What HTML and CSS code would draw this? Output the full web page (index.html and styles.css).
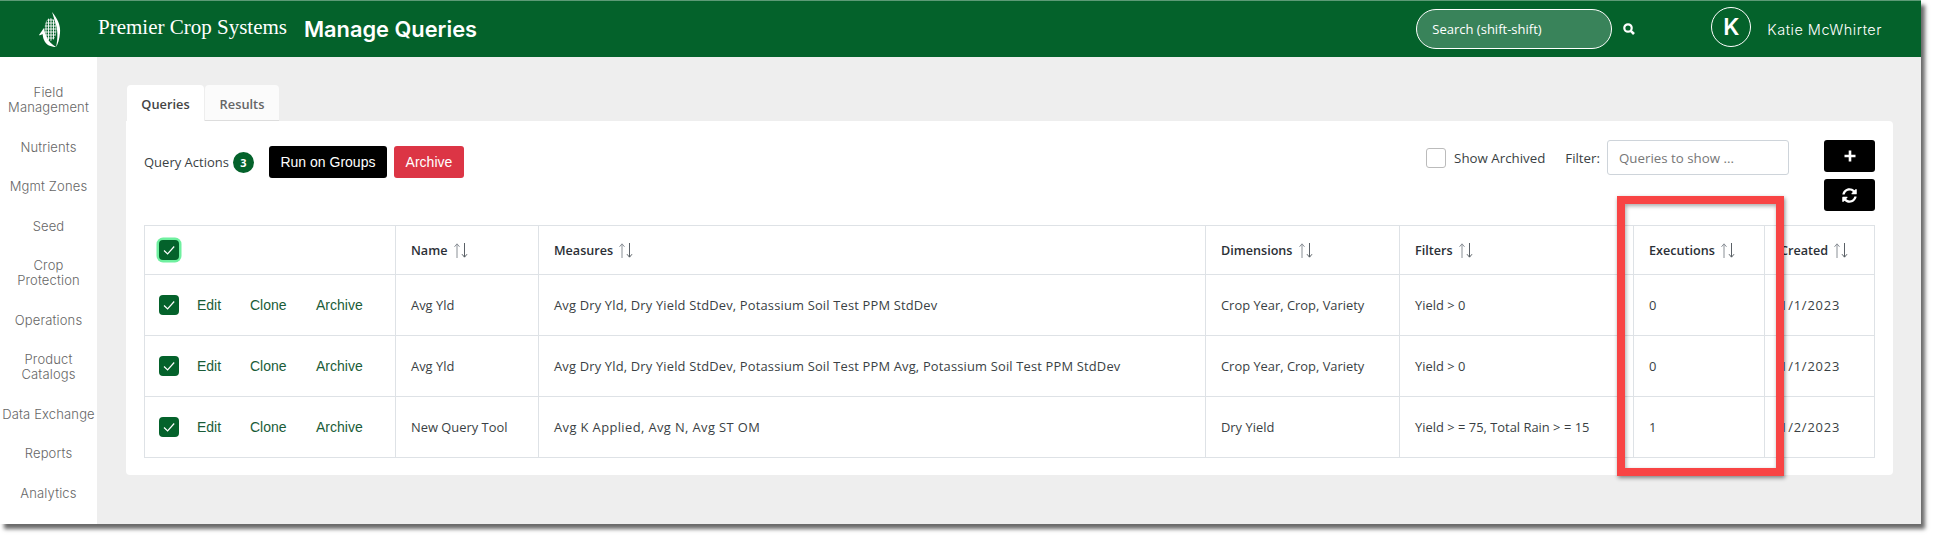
FILE: index.html
```html
<!DOCTYPE html>
<html>
<head>
    <title>Manage Queries</title>
    <link rel="stylesheet" href="styles.css">
</head>
<body>
    <svg class="sprite" width="0" height="0">
        <symbol id="sort-arrows" viewBox="0 0 14 15">
            <path class="arrow-up" d="M3 15 V1 M.5 3.8 L3 .8 L5.5 3.8"/>
            <path class="arrow-down" d="M10.5 0 V14 M8 11.2 L10.5 14.2 L13 11.2"/>
        </symbol>
        <symbol id="tick" viewBox="0 0 20 20">
            <path d="M5 10.5 L8.6 14 L15.2 6.5"/>
        </symbol>
    </svg>

    <div class="screen">
        <header class="topbar">
            <svg class="logo" viewBox="0 0 24 38" width="24" height="38">
                <clipPath id="cob"><ellipse cx="12.5" cy="18.5" rx="6" ry="11.5"/></clipPath>
                <g clip-path="url(#cob)" stroke="#fff" stroke-width=".9">
                    <path d="M5 9 H20 M5 12 H20 M5 15 H20 M5 18 H20 M5 21 H20 M5 24 H20 M5 27 H20"/>
                    <path d="M8 5 V32 M10.5 5 V32 M13 5 V32 M15.5 5 V32 M18 5 V32"/>
                </g>
                <path d="M14 1 C19 7 23 14 22 22 C21.5 28 20 33 18 36 C20 28 20 18 17 11 C16 7 15 4 14 1Z" fill="#fff"/>
                <path d="M1 24 C3 21 4.5 19 6 17 C7 24 10 31 18 36 C13 36 8 34 6 29 C5 27 5 25 4.5 23 C3.5 24 2 24.5 1 24Z" fill="#fff"/>
            </svg>
            <span class="brand">Premier Crop Systems</span>
            <span class="page-title">Manage Queries</span>
            <div class="search-pill">Search (shift-shift)</div>
            <svg class="search-icon" viewBox="0 0 12 12" width="12" height="12">
                <circle cx="5" cy="5" r="3.7" fill="none" stroke="#fff" stroke-width="2.2"/>
                <path d="M7.8 7.8 L11 11" stroke="#fff" stroke-width="2.6"/>
            </svg>
            <div class="avatar">K</div>
            <span class="user-name">Katie McWhirter</span>
        </header>

        <div class="main">
            <nav class="sidebar">
                <a>Field<br>Management</a>
                <a>Nutrients</a>
                <a>Mgmt Zones</a>
                <a>Seed</a>
                <a>Crop<br>Protection</a>
                <a>Operations</a>
                <a>Product<br>Catalogs</a>
                <a>Data Exchange</a>
                <a>Reports</a>
                <a>Analytics</a>
            </nav>

            <div class="content">
                <div class="tabs">
                    <div class="tab active">Queries</div>
                    <div class="tab">Results</div>
                </div>
                <div class="card">
                    <div class="toolbar">
                        <div class="actions">
                            <span class="actions-label">Query Actions</span>
                            <span class="badge">3</span>
                            <button class="btn btn-black btn-run">Run on Groups</button>
                            <button class="btn btn-red">Archive</button>
                        </div>
                        <div class="filters">
                            <span class="check-empty"></span>
                            <span class="show-label">Show Archived</span>
                            <span class="filter-label">Filter:</span>
                            <div class="filter-input">Queries to show ...</div>
                        </div>
                        <div class="icon-btns">
                            <button class="btn btn-black btn-icon">
                                <svg viewBox="0 0 14 14" width="14" height="14"><path d="M7 1.5 V12.5 M1.5 7 H12.5" stroke="#fff" stroke-width="2.6"/></svg>
                            </button>
                            <button class="btn btn-black btn-icon">
                                <svg viewBox="0 0 512 512" width="15" height="15"><path fill="#fff" d="M370.72 133.28C339.458 104.008 298.888 87.962 255.848 88c-77.458.068-144.328 53.178-162.791 126.85-1.344 5.363-6.122 9.15-11.651 9.15H24.103c-7.498 0-13.194-6.807-11.807-14.176C33.933 94.924 134.813 8 256 8c66.448 0 126.791 26.136 171.315 68.685L463.03 40.97C478.149 25.851 504 36.559 504 57.941V192c0 13.255-10.745 24-24 24H345.941c-21.382 0-32.09-25.851-16.971-40.971l41.75-41.749zM32 296h134.059c21.382 0 32.09 25.851 16.971 40.971l-41.75 41.75c31.262 29.273 71.835 45.319 114.876 45.28 77.418-.07 144.315-53.144 162.787-126.849 1.344-5.363 6.122-9.15 11.651-9.15h57.304c7.498 0 13.194 6.807 11.807 14.176C478.067 417.076 377.187 504 256 504c-66.448 0-126.791-26.136-171.315-68.685L48.97 471.03C33.851 486.149 8 475.441 8 454.059V320c0-13.255 10.745-24 24-24z"/></svg>
                            </button>
                        </div>
                    </div>

                    <table class="query-table">
                        <colgroup>
                            <col class="col-select"><col class="col-name"><col class="col-measures"><col class="col-dims"><col class="col-filters"><col class="col-exec"><col class="col-created">
                        </colgroup>
                        <thead>
                            <tr>
                                <th><span class="check check-focus"><svg><use href="#tick"/></svg></span></th>
                                <th>Name <svg class="sort"><use href="#sort-arrows"/></svg></th>
                                <th>Measures <svg class="sort"><use href="#sort-arrows"/></svg></th>
                                <th>Dimensions <svg class="sort"><use href="#sort-arrows"/></svg></th>
                                <th>Filters <svg class="sort"><use href="#sort-arrows"/></svg></th>
                                <th>Executions <svg class="sort"><use href="#sort-arrows"/></svg></th>
                                <th>Created <svg class="sort"><use href="#sort-arrows"/></svg></th>
                            </tr>
                        </thead>
                        <tbody>
                            <tr>
                                <td>
                                    <div class="row-actions">
                                        <span class="check"><svg><use href="#tick"/></svg></span>
                                        <a class="row-edit">Edit</a><a class="row-clone">Clone</a><a>Archive</a>
                                    </div>
                                </td>
                                <td>Avg Yld</td>
                                <td class="measures">Avg Dry Yld, Dry Yield StdDev, Potassium Soil Test PPM StdDev</td>
                                <td>Crop Year, Crop, Variety</td>
                                <td>Yield &gt; 0</td>
                                <td>0</td>
                                <td class="date">1/1/2023</td>
                            </tr>
                            <tr>
                                <td>
                                    <div class="row-actions">
                                        <span class="check"><svg><use href="#tick"/></svg></span>
                                        <a class="row-edit">Edit</a><a class="row-clone">Clone</a><a>Archive</a>
                                    </div>
                                </td>
                                <td>Avg Yld</td>
                                <td class="measures">Avg Dry Yld, Dry Yield StdDev, Potassium Soil Test PPM Avg, Potassium Soil Test PPM StdDev</td>
                                <td>Crop Year, Crop, Variety</td>
                                <td>Yield &gt; 0</td>
                                <td>0</td>
                                <td class="date">1/1/2023</td>
                            </tr>
                            <tr>
                                <td>
                                    <div class="row-actions">
                                        <span class="check"><svg><use href="#tick"/></svg></span>
                                        <a class="row-edit">Edit</a><a class="row-clone">Clone</a><a>Archive</a>
                                    </div>
                                </td>
                                <td>New Query Tool</td>
                                <td class="measures measures-short">Avg K Applied, Avg N, Avg ST OM</td>
                                <td>Dry Yield</td>
                                <td>Yield <span class="op">&gt;</span>= 75, Total Rain <span class="op">&gt;</span>= 15</td>
                                <td>1</td>
                                <td class="date">1/2/2023</td>
                            </tr>
                        </tbody>
                    </table>
                </div>
            </div>
        </div>
    </div>

    <!-- Red callout drawn over the Executions column -->
    <div class="callout"></div>
</body>
</html>
```

FILE: styles.css
```css
html, body {
    margin: 0;
    height: 539px;
    overflow: hidden;
    background: #fff;
}

body {
    position: relative;
    font-family: "Open Sans", "Noto Sans", sans-serif;
    color: #3a3f44;
}

.sprite {
    display: block;
    height: 0;
}

.screen {
    width: 1921px;
    height: 524px;
    background: #eee;
    box-shadow: 4px 5px 4px #6a6a6a;
    display: flex;
    flex-direction: column;
}

/* Top bar */
.topbar {
    height: 56px;
    flex: none;
    background: #04622b;
    border-top: 1px solid #5d9a76;
    display: flex;
    align-items: center;
    color: #fff;
}

.logo {
    margin-left: 38px;
    margin-top: 2px;
}

.brand {
    margin-left: 36px;
    margin-top: -4px;
    font-family: "Liberation Serif", serif;
    font-size: 21px;
}

.page-title {
    margin-left: 17px;
    font-family: Inter, sans-serif;
    font-size: 21.8px;
    font-weight: 600;
}

.search-pill {
    margin-left: auto;
    width: 196px;
    height: 40px;
    box-sizing: border-box;
    padding-left: 15px;
    display: flex;
    align-items: center;
    background: #39835a;
    border: 1px solid #fff;
    border-radius: 20px;
    font-size: 13px;
}

.search-icon {
    margin-left: 11px;
}

.avatar {
    width: 40px;
    height: 40px;
    box-sizing: border-box;
    margin-left: 76px;
    margin-top: -4px;
    border: 1px solid #fff;
    border-radius: 50%;
    display: flex;
    align-items: center;
    justify-content: center;
    font-family: Inter, sans-serif;
    font-size: 23px;
    font-weight: 600;
}

.user-name {
    margin-left: 16px;
    margin-right: 39px;
    font-family: Inter, sans-serif;
    font-size: 14.5px;
    font-weight: 300;
    letter-spacing: .5px;
}

/* Sidebar */
.main {
    flex: 1;
    display: flex;
    min-height: 0;
}

.sidebar {
    width: 97px;
    flex: none;
    box-sizing: border-box;
    padding-top: 16px;
    background: #fff;
    text-align: center;
    font-family: Inter, sans-serif;
    font-size: 13px;
    font-weight: 300;
    letter-spacing: .15px;
    line-height: 15px;
    color: #666;
}

.sidebar a {
    display: block;
    padding: 12.25px 0;
}

/* Content */
.content {
    flex: 1;
    box-sizing: border-box;
    padding: 28px 29px 0 29px;
}

.tabs {
    display: flex;
    padding-left: 1px;
    gap: 1px;
}

.tab {
    height: 36px;
    box-sizing: border-box;
    padding: 10px 0 0;
    width: 74px;
    text-align: center;
    background: #fbfbfb;
    border-radius: 4px 4px 0 0;
    border-bottom: 1px solid #ddd;
    font-size: 12.8px;
    font-weight: 600;
    color: #666;
}

.tab.active {
    width: 77px;
    background: #fff;
    border-bottom: none;
    color: #444;
}

.card {
    background: #fff;
    border-radius: 0 4px 4px 4px;
    height: 354px;
    box-sizing: border-box;
    padding: 25px 18px 0;
}

.toolbar {
    display: flex;
    height: 79px;
}

.actions {
    display: flex;
    align-items: center;
    height: 32px;
}

.actions-label {
    font-size: 13px;
}

.badge {
    width: 21px;
    height: 21px;
    margin-left: 4px;
    border-radius: 50%;
    background: #04622b;
    color: #fff;
    font-size: 11px;
    font-weight: 700;
    display: flex;
    align-items: center;
    justify-content: center;
}

.btn {
    border: none;
    border-radius: 3px;
    color: #fff;
    font-family: "Liberation Sans", sans-serif;
    font-size: 14px;
    padding: 0;
}

.btn-black {
    background: #000;
}

.btn-red {
    background: #dc3545;
    width: 70px;
    height: 32px;
    margin-left: 7px;
}

.btn-run {
    width: 118px;
    height: 32px;
    margin-left: 15px;
}

.filters {
    margin-left: auto;
    margin-top: -6px;
    height: 35px;
    display: flex;
    align-items: center;
    font-size: 13.3px;
}

.check-empty {
    width: 20px;
    height: 20px;
    box-sizing: border-box;
    border: 1px solid #bbb;
    border-radius: 3px;
}

.show-label {
    margin-left: 8px;
}

.filter-label {
    margin-left: 20px;
}

.filter-input {
    width: 182px;
    height: 35px;
    box-sizing: border-box;
    margin-left: 7px;
    padding: 8px 11px 0;
    border: 1px solid #ced4da;
    border-radius: 3px;
    color: #777;
}

.icon-btns {
    margin-left: 35px;
    margin-top: -6px;
    display: flex;
    flex-direction: column;
    gap: 7px;
}

.btn-icon {
    width: 51px;
    height: 32px;
    display: flex;
    align-items: center;
    justify-content: center;
}

/* Table */
.query-table {
    width: 100%;
    table-layout: fixed;
    border-collapse: collapse;
    font-size: 12.9px;
}

.col-select { width: 251px; }
.col-name { width: 143px; }
.col-measures { width: 667px; }
.col-dims { width: 194px; }
.col-filters { width: 234px; }
.col-exec { width: 131px; }
.col-created { width: 110px; }

.query-table th,
.query-table td {
    border: 1px solid #dee2e6;
    padding: 0 15px;
    text-align: left;
    white-space: nowrap;
}

.query-table th:first-child,
.query-table td:first-child {
    padding-left: 14px;
}

.query-table th {
    height: 48px;
    font-weight: 600;
    font-size: 12.6px;
    color: #2b2f36;
}

.query-table td {
    height: 60px;
}

.query-table .measures {
    letter-spacing: .18px;
}

.query-table .measures-short {
    letter-spacing: .4px;
}

.query-table .date {
    letter-spacing: .8px;
}

.op {
    letter-spacing: 3.5px;
}

.sort {
    width: 14px;
    height: 15px;
    margin-left: 3px;
    vertical-align: -3px;
    fill: none;
    stroke-width: 1;
}

.arrow-up {
    stroke: #8a9096;
}

.arrow-down {
    stroke: #5a6066;
}

.check {
    width: 20px;
    height: 20px;
    flex: none;
    display: block;
    background: #04622b;
    border-radius: 4px;
}

.check svg {
    display: block;
    width: 20px;
    height: 20px;
    fill: none;
    stroke: #fff;
    stroke-width: 1.2;
}

.check-focus {
    box-shadow: 0 0 0 2.5px #6ff09f;
}

.row-actions {
    display: flex;
    align-items: center;
    font-family: "Liberation Sans", sans-serif;
    font-size: 14px;
    color: #1a5c38;
}

.row-edit {
    margin-left: 18px;
    width: 53px;
}

.row-clone {
    width: 66px;
}

/* Callout */
.callout {
    position: absolute;
    left: 1617px;
    top: 196px;
    width: 167px;
    height: 280px;
    box-sizing: border-box;
    border: 8px solid #f84444;
    box-shadow: 1px 2px 4px rgba(0, 0, 0, .45), inset 1px 2px 4px rgba(0, 0, 0, .35);
}
```
